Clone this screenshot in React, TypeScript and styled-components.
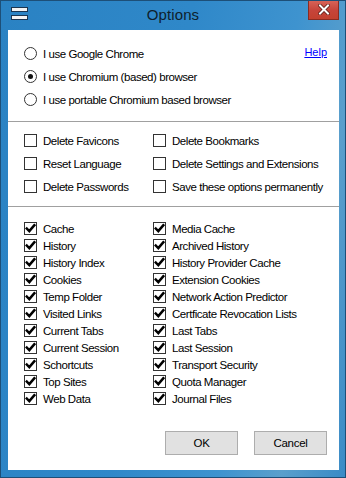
import React from "react";
import styled, { createGlobalStyle } from "styled-components";

const Global = createGlobalStyle`
  html, body { margin: 0; padding: 0; background: #2f86c6; }
  body { font-family: "Liberation Sans", Arial, sans-serif; }
`;

const Window = styled.div`
  width: 346px;
  height: 478px;
  box-sizing: border-box;
  border: 1px solid #1d4f78;
  background: linear-gradient(100deg, #2a82c3 0%, #2f88c9 45%, #3e93cf 70%, #5a9fcc 85%, #3a8bc6 100%);
  display: flex;
  flex-direction: column;
  overflow: hidden;
`;

const TitleBar = styled.div`
  height: 29px;
  display: flex;
  align-items: flex-start;
  position: relative;
`;

const MenuIcon = styled.div`
  width: 17px;
  height: 14px;
  margin: 6px 0 0 10px;
  display: flex;
`;

const Title = styled.div`
  position: absolute;
  left: 0;
  right: 0;
  top: 5px;
  text-align: center;
  font-size: 15px;
  color: #0e1f2c;
  letter-spacing: 0.1px;
`;

const CloseBtn = styled.div`
  position: absolute;
  right: 6px;
  top: -1px;
  width: 31px;
  height: 20px;
  box-sizing: border-box;
  border: 1px solid #8a2b22;
  border-top: none;
  background: linear-gradient(#d9665a, #c6443a 55%, #c2402f);
  display: flex;
  align-items: center;
  justify-content: center;
`;

const Client = styled.div`
  margin: 0 6px 7px 7px;
  flex: 1;
  background: #fff;
  display: flex;
  flex-direction: column;
  font-size: 11.5px;
  letter-spacing: -0.45px;
  color: #000;
`;

const TopSection = styled.div`
  display: flex;
  justify-content: space-between;
  padding: 12px 12px 10px 16px;
`;

const Column = styled.div`
  display: flex;
  flex-direction: column;
`;

const Row = styled.label<{ $h: number }>`
  height: ${(p) => p.$h}px;
  display: flex;
  align-items: center;
  gap: 6px;
  white-space: nowrap;
`;

const HelpLink = styled.a`
  color: #0000ff;
  text-decoration: underline;
  margin-top: 4px;
  font-size: 11px;
  letter-spacing: 0;
`;

const Separator = styled.div`
  height: 1px;
  background: #a0a0a0;
`;

const Grid = styled.div<{ $pt: number; $pb: number }>`
  display: grid;
  grid-template-columns: 129px 1fr;
  padding: ${(p) => p.$pt}px 0 ${(p) => p.$pb}px 16px;
`;

const Box = styled.span`
  width: 13px;
  height: 13px;
  box-sizing: border-box;
  border: 1px solid #333;
  background: #fff;
  display: flex;
  align-items: center;
  justify-content: center;
  flex: none;
`;

const Radio = styled.span`
  width: 13px;
  height: 13px;
  box-sizing: border-box;
  border: 1px solid #333;
  border-radius: 50%;
  background: #fff;
  display: flex;
  align-items: center;
  justify-content: center;
  flex: none;
`;

const Dot = styled.span`
  width: 5px;
  height: 5px;
  border-radius: 50%;
  background: #111;
`;

const Buttons = styled.div`
  margin-top: auto;
  display: flex;
  justify-content: flex-end;
  gap: 16px;
  padding: 0 12px 15px 0;
`;

const Button = styled.button`
  width: 73px;
  height: 24px;
  box-sizing: border-box;
  border: 1px solid #adadad;
  background: #e1e1e1;
  font-family: "Liberation Sans", Arial, sans-serif;
  font-size: 11.5px;
  letter-spacing: -0.3px;
  color: #000;
  padding: 0;
`;

const Check = () => (
  <svg width="11" height="11" viewBox="0 0 11 11">
    <path d="M1.8 5.6 L4.3 8.1 L9.3 2.2" fill="none" stroke="#000" strokeWidth="2.5" strokeLinecap="square" />
  </svg>
);

const CheckRow = ({ label, checked, h }: { label: string; checked?: boolean; h: number }) => (
  <Row $h={h}>
    <Box>{checked && <Check />}</Box>
    <span>{label}</span>
  </Row>
);

const left = [
  "Cache",
  "History",
  "History Index",
  "Cookies",
  "Temp Folder",
  "Visited Links",
  "Current Tabs",
  "Current Session",
  "Schortcuts",
  "Top Sites",
  "Web Data",
];
const right = [
  "Media Cache",
  "Archived History",
  "History Provider Cache",
  "Extension Cookies",
  "Network Action Predictor",
  "Certficate Revocation Lists",
  "Last Tabs",
  "Last Session",
  "Transport Security",
  "Quota Manager",
  "Journal Files",
];

export default function App() {
  return (
    <>
      <Global />
      <Window>
        <TitleBar>
          <MenuIcon>
            <svg width="17" height="14" viewBox="0 0 17 14">
              <rect x="0.5" y="0.5" width="16" height="4" fill="#f4f4f4" stroke="#1b3550" />
              <rect x="0.5" y="8.5" width="16" height="4" fill="#f4f4f4" stroke="#1b3550" />
            </svg>
          </MenuIcon>
          <Title>Options</Title>
          <CloseBtn>
            <svg width="12" height="11" viewBox="0 0 12 11">
              <path d="M2 1.5 L10 9.5 M10 1.5 L2 9.5" stroke="#5a1a14" strokeWidth="3.6" strokeLinecap="square" />
              <path d="M2 1.5 L10 9.5 M10 1.5 L2 9.5" stroke="#fff" strokeWidth="2" strokeLinecap="square" />
            </svg>
          </CloseBtn>
        </TitleBar>
        <Client>
          <TopSection>
            <Column>
              <Row $h={23}>
                <Radio />
                <span>I use Google Chrome</span>
              </Row>
              <Row $h={23}>
                <Radio>
                  <Dot />
                </Radio>
                <span>I use Chromium (based) browser</span>
              </Row>
              <Row $h={23}>
                <Radio />
                <span>I use portable Chromium based browser</span>
              </Row>
            </Column>
            <HelpLink href="#">Help</HelpLink>
          </TopSection>
          <Separator />
          <Grid $pt={7} $pb={8}>
            <CheckRow h={23} label="Delete Favicons" />
            <CheckRow h={23} label="Delete Bookmarks" />
            <CheckRow h={23} label="Reset Language" />
            <CheckRow h={23} label="Delete Settings and Extensions" />
            <CheckRow h={23} label="Delete Passwords" />
            <CheckRow h={23} label="Save these options permanently" />
          </Grid>
          <Separator />
          <Grid $pt={13} $pb={0}>
            {left.map((l, i) => (
              <React.Fragment key={l}>
                <CheckRow h={17} label={l} checked />
                <CheckRow h={17} label={right[i]} checked />
              </React.Fragment>
            ))}
          </Grid>
          <Buttons>
            <Button>OK</Button>
            <Button>Cancel</Button>
          </Buttons>
        </Client>
      </Window>
    </>
  );
}
